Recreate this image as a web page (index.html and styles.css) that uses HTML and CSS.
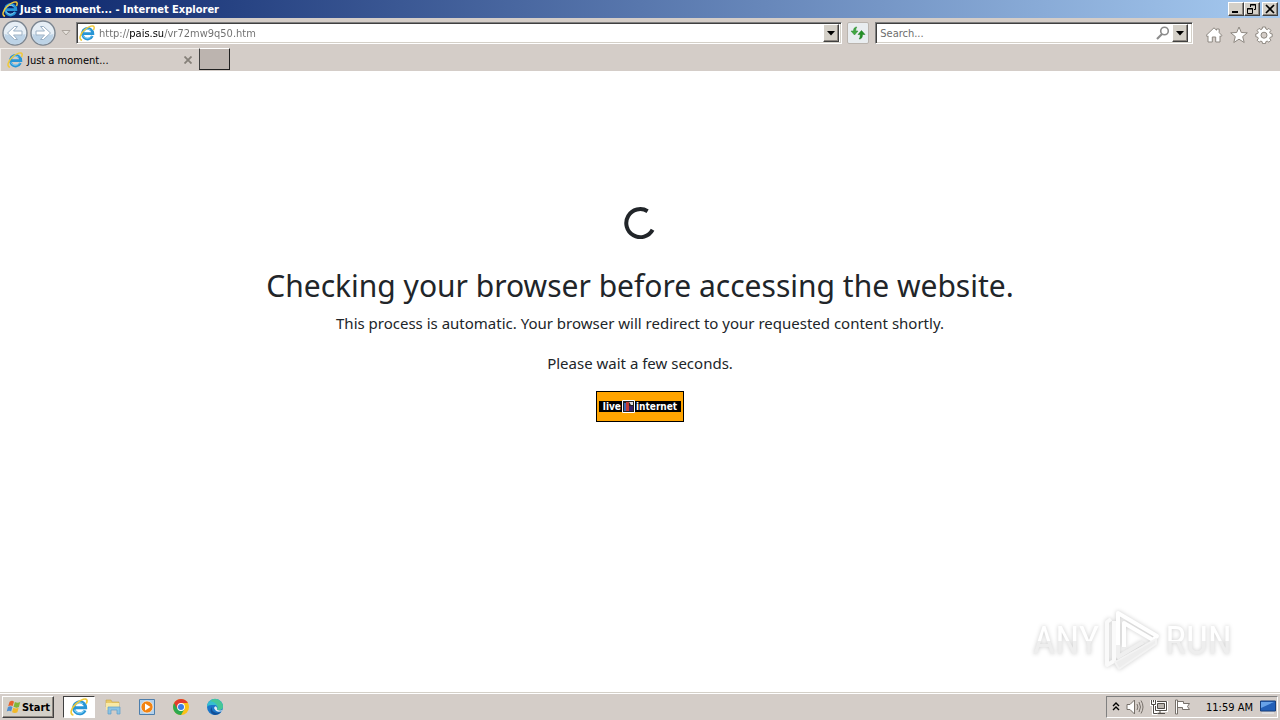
FILE: index.html
```html
<!DOCTYPE html>
<html lang="en">
<head>
    <meta charset="UTF-8">
    <meta name="viewport" content="width=device-width, initial-scale=1.0">
    <title>Just a moment...</title>
    <link rel="stylesheet" href="styles.css">
</head>
<body>

    <!-- shared icon -->
    <svg class="defs" width="0" height="0">
        <symbol id="ie" viewBox="0 0 16 16">
            <path d="M13.400 11A5.300 5.300 0 1 1 13.900 8.700H4.500" fill="none" stroke="#2795d6" stroke-width="2.700"/>
            <path d="M12.600 10.800A4.800 4.800 0 0 1 4 10.400M4.500 6.600A4.800 4.800 0 0 1 11.500 5.200" fill="none" stroke="#86d3f7" stroke-width="1"/>
            <path d="M3 15.200C-.6 14.600 1 9 5.500 5 10 1 14.600-.3 15.100 2.100c.2.900-.1 1.900-.7 2.900" fill="none" stroke="#f0c93a" stroke-width="1.500"/>
        </symbol>
    </svg>

    <header class="titlebar">
        <svg class="icon16"><use href="#ie"/></svg>
        <span class="title">Just a moment... - Internet Explorer</span>
        <div class="window-buttons">
            <button class="btn3d" aria-label="Minimize"><svg width="12" height="10"><path d="M2 8h6" stroke="#000" stroke-width="2"/></svg></button>
            <button class="btn3d" aria-label="Restore"><svg width="12" height="10"><path d="M4.500 3V.5h5v5H8M4 1h6M1.500 4.500h5v5h-5zM1 5h6" fill="none" stroke="#000"/></svg></button>
            <button class="btn3d close" aria-label="Close"><svg width="12" height="10"><path d="M2 1l8 8M10 1L2 9" stroke="#000" stroke-width="1.700"/></svg></button>
        </div>
    </header>

    <nav class="toolbar">
        <div class="nav-buttons">
            <button class="round" aria-label="Back"><svg width="26" height="26" viewBox="0 0 26 26"><circle cx="13" cy="13" r="12" fill="#e6eef5" stroke="#7b8590" stroke-width="1.400"/><path d="M2.500 14a10.500 10.500 0 0 0 21 0q-10 3-21 0z" fill="#bdd3e6"/><path d="M5.500 13l7-6.500h3L11.500 11H20v4h-8.500l4 4.500h-3z" fill="#fff" stroke="#9bb0c4"/></svg></button>
            <button class="round" aria-label="Forward"><svg width="26" height="26" viewBox="0 0 26 26"><circle cx="13" cy="13" r="12" fill="#e6eef5" stroke="#7b8590" stroke-width="1.400"/><path d="M2.500 14a10.500 10.500 0 0 0 21 0q-10 3-21 0z" fill="#bdd3e6"/><path d="M20.500 13l-7-6.500h-3l4 4.500H6v4h8.500l-4 4.500h3z" fill="#fff" stroke="#9bb0c4"/></svg></button>
            <button class="recent" aria-label="Recent pages"><svg width="10" height="6"><path d="M1 .5h8L5 5z" fill="#e6e2dd" stroke="#aaa39c"/></svg></button>
        </div>
        <div class="field address">
            <svg class="icon16"><use href="#ie"/></svg>
            <input type="text" class="url" aria-label="Address" value="http://pais.su/vr72mw9q50.htm">
            <button class="btn3d drop" aria-label="Show addresses"><svg width="8" height="5"><path d="M0 0h8L4 4.500z"/></svg></button>
        </div>
        <button class="refresh" aria-label="Refresh">
            <svg width="16" height="14" viewBox="0 0 16 14"><path d="M1 5h2.500c0-2.500 1-4 3.500-4-1 1-1.200 2-1.200 4H8L4.500 9z" fill="#41a741" stroke="#2f8a35" stroke-width=".5"/><path d="M15 8.500h-2.500c0 3-1 4.500-3.500 4.500 1-1 1.200-2 1.200-4.500H8L11.500 4.500z" fill="#249126" stroke="#1b7a20" stroke-width=".5"/></svg>
        </button>
        <div class="field search">
            <input type="text" aria-label="Search" placeholder="Search...">
            <svg width="14" height="14" viewBox="0 0 14 14"><circle cx="8.500" cy="5" r="3.800" fill="none" stroke="#8b8b8b" stroke-width="1.600"/><path d="M6 8l-5 5" stroke="#8b8b8b" stroke-width="2.200"/></svg>
            <button class="btn3d drop" aria-label="Search providers"><svg width="8" height="5"><path d="M0 0h8L4 4.500z"/></svg></button>
        </div>
        <div class="tools">
            <button aria-label="Home"><svg width="18" height="18" viewBox="0 0 18 18"><path d="M1 9.500L9 1.800l2.500 2.400V3h2.700v3.700L17 9.500l-1.200 1L15 9.800V16h-4.300v-5H7.300v5H3V9.800l-.8.700z" fill="#fff" stroke="#8d8780"/></svg></button>
            <button aria-label="Favorites"><svg width="18" height="18" viewBox="0 0 18 18"><path d="M9 1l2.300 5.500 6 .3-4.600 3.800 1.500 5.900L9 13.200l-5.200 3.300 1.500-5.900L.7 6.800l6-.3z" fill="#fff" stroke="#8d8780"/></svg></button>
            <button aria-label="Tools"><svg width="18" height="18" viewBox="0 0 18 18"><path d="M7.500 1h3l.4 2 1.300.6 1.700-1.200 2 2-1.200 1.800.6 1.300 1.900.4v2.800l-1.900.5-.6 1.300 1.200 1.700-2 2-1.700-1.100-1.300.5-.4 2h-3l-.4-2-1.300-.5-1.700 1.100-2-2 1.200-1.700-.6-1.300-1.900-.5V7.900l1.900-.4.6-1.300-1.200-1.800 2-2 1.700 1.200L7.100 3z" fill="#fff" stroke="#8d8780"/><circle cx="9" cy="9.200" r="3" fill="#d4cdc8" stroke="#8d8780"/></svg></button>
        </div>
    </nav>

    <div class="tabs">
        <div class="tab">
            <svg class="icon16"><use href="#ie"/></svg>
            <span>Just a moment...</span>
            <button class="tab-close" aria-label="Close tab"><svg width="8" height="8"><path d="M.5.5l7 7M7.500.5l-7 7" stroke="#858079" stroke-width="1.800"/></svg></button>
        </div>
        <button class="new-tab" aria-label="New tab"></button>
    </div>

    <main class="page">
        <svg class="spinner" width="32" height="32" viewBox="0 0 32 32"><path d="M28.600 22.800A14 14 0 1 1 23.600 4.200" fill="none" stroke="#212529" stroke-width="4"/></svg>
        <h1>Checking your browser before accessing the website.</h1>
        <p>This process is automatic. Your browser will redirect to your requested content shortly.</p>
        <p>Please wait a few seconds.</p>
        <a class="counter" href="#">
            <span class="strip">
                <span>live</span>
                <svg width="13" height="13"><path d="M.5.5h12v12H.5z" fill="#222" stroke="#fff"/><path d="M2 3h2v8H2z" fill="#3b66b5"/><path d="M4 2h3v9H4z" fill="#c03a35"/><path d="M7 6h4v5H7z" fill="#36216a"/><path d="M7 2h4v3H9z" fill="#ddd"/></svg>
                <span>internet</span>
            </span>
        </a>

        <div class="watermark">
            <span>ANY</span>
            <svg width="60" height="64" viewBox="0 0 60 64" fill="none" stroke-width="4" stroke-linejoin="round">
                <path d="M9 10l-4 3v43l7-4V12" stroke="#fafafa"/>
                <path d="M16 34v14l25-15" stroke="#efefef"/>
                <path d="M16 36V4l39 23-4 4-29-17v24" stroke="#fff"/>
                <path d="M13 53l41-23v5L17 60z" fill="#ededed" stroke="#f3f3f3" stroke-width="2"/>
            </svg>
            <span>RUN</span>
        </div>
    </main>

    <footer class="taskbar">
        <button class="btn3d start">
            <svg width="16" height="16" viewBox="0 0 18 16"><path d="M4 2q3-2 5 0L7.500 7q-2-1.500-5 0z" fill="#e8632d"/><path d="M10 2.500q3 1.500 6 0L14.500 8q-3 1.500-6-.2z" fill="#82b63a"/><path d="M2.200 8q3-1.700 5 0L5.800 13q-2-1.500-5 0z" fill="#4e8ed0"/><path d="M8.200 8.800q3 1.700 6 0L12.800 14q-3 1.500-6-.2z" fill="#f2b928"/></svg>
            <span>Start</span>
        </button>
        <div class="apps">
            <button class="app active" aria-label="Internet Explorer"><svg width="18" height="18"><use href="#ie"/></svg></button>
            <button class="app" aria-label="Explorer"><svg width="18" height="18" viewBox="0 0 18 18"><path d="M2 2h5l1 2h7v5H2z" fill="#e8c967" stroke="#c7a648" stroke-width=".6"/><path d="M2 5h13v7H2z" fill="#f8e9a5"/><path d="M4 9h12v7h-3v-4H7v4H4z" fill="#8cc4e4" stroke="#5d9fc8" stroke-width=".7"/></svg></button>
            <button class="app" aria-label="Media Player"><svg width="18" height="18" viewBox="0 0 18 18"><path d="M1.500 1.500h15v15h-15z" fill="#b4d1eb" stroke="#4d7eac"/><circle cx="9" cy="9" r="6" fill="#f28312" stroke="#fff" stroke-width=".6"/><path d="M7 5.500l5.500 3.500L7 12.500z" fill="#fff"/></svg></button>
            <button class="app" aria-label="Chrome"><svg width="18" height="18" viewBox="0 0 18 18"><circle cx="9" cy="9" r="8" fill="#fbc116"/><path d="M2.100 5A8 8 0 0 0 9 17l3.500-6L9 9z" fill="#2da94f"/><path d="M2.100 5A8 8 0 0 1 15.900 5H9L5.500 11z" fill="#e33b2e"/><circle cx="9" cy="9" r="3.900" fill="#fff"/><circle cx="9" cy="9" r="3" fill="#3c7de6"/></svg></button>
            <button class="app" aria-label="Edge"><svg width="18" height="18" viewBox="0 0 18 18"><circle cx="9" cy="9" r="8" fill="#1b76c9"/><path d="M1 9a8 8 0 0 1 16-.5c0 3-2.500 4-6 3.200 1.500-2 .2-4.700-2.500-4.700C5 7 2 7 1 9z" fill="#35bfd0"/><path d="M9 1a8 8 0 0 1 8 7.500c0 3-2.500 4-6 3.200 2-3.500-1-8-7-8.400Q6 1 9 1z" fill="#4fcb7d" opacity=".7"/><path d="M6 9c-1 4 2.500 7 9 5.300A8 8 0 0 1 9 17C4 16 3.500 11 6 9z" fill="#124f97"/><path d="M8 10q.5-1.500 2-1.800 1.700 1.500 1 3.500 2.500 1.500 5.300.3l-.6 1.200Q10 15 8 10z" fill="#e3edf3"/></svg></button>
        </div>
        <div class="tray">
            <svg width="8" height="10"><path d="M1 4l3-3 3 3M1 8l3-3 3 3" fill="none" stroke="#000" stroke-width="1.400"/></svg>
            <svg width="18" height="16" viewBox="0 0 18 16"><path d="M1 5.500h3L8.500 1v14L4 10.500H1z" fill="#fff" stroke="#77716b"/><path d="M11 5q1.800 3 0 6M13 3q3 5 0 10M15 1.500q4 6.500 0 13" fill="none" stroke="#77716b"/></svg>
            <svg width="18" height="16" viewBox="0 0 18 16"><path d="M6.500 3.500h10v8h-10z" fill="#b9b4ae" stroke="#fff" stroke-width="3"/><path d="M5.500 2.500h11v9h-11zM7.500 4.500h7v5h-7zM10 12v2M7 14.500h8" fill="none" stroke="#4f4b47"/><path d="M1.500 1v4.500h4V1M3.500 5.500v9h4" fill="none" stroke="#fff" stroke-width="3"/><path d="M1.500 1v4.500h4V1M3.500 5.500v9h4M3.500 1v2" fill="none" stroke="#4f4b47"/></svg>
            <svg width="18" height="16" viewBox="0 0 18 16"><path d="M1.500 1h2v14h-2zM3.500 2.500h6v2h6l-2 3 2 3h-7v-2h-5z" fill="#fff" stroke="#77716b"/></svg>
            <span class="clock">11:59 AM</span>
            <svg width="16" height="14" viewBox="0 0 16 14"><path d="M.5 1h15v10H.5z" fill="#2360b8" stroke="#173f7c"/><path d="M1 2h13L1 8z" fill="#67a2e8"/><path d="M2 13h12" stroke="#e8edf3"/></svg>
        </div>
    </footer>

</body>
</html>
```

FILE: styles.css
```css
* {
    box-sizing: border-box;
}

body {
    display: flex;
    flex-direction: column;
    height: 100vh;
    margin: 0;
    overflow: hidden;
    background: #fff;
    color: #000;
    font-family: Tahoma, "DejaVu Sans Condensed", "DejaVu Sans", sans-serif;
    font-size: 11px;
}

button {
    display: flex;
    align-items: center;
    justify-content: center;
    margin: 0;
    padding: 0;
    border: 0;
    background: none;
    color: inherit;
    font: inherit;
}

svg {
    display: block;
    flex: none;
}

.defs {
    position: absolute;
}

.icon16 {
    width: 16px;
    height: 16px;
}

.btn3d {
    border: 1px solid;
    border-color: #fff #404040 #404040 #fff;
    box-shadow: inset -1px -1px 0 #8c8680;
    background: #d4d0c8;
}

/* title bar */
.titlebar {
    display: flex;
    align-items: center;
    gap: 2px;
    height: 18px;
    padding: 0 2px;
    background: linear-gradient(to right, #0a246a, #a6caf0);
    color: #fff;
}

.title {
    flex: 1;
    font-weight: bold;
}

.window-buttons {
    display: flex;
}

.window-buttons .btn3d {
    width: 16px;
    height: 14px;
}

.window-buttons .close {
    margin-left: 2px;
}

/* toolbar */
.toolbar {
    display: flex;
    align-items: center;
    height: 30px;
    padding: 0 7px 0 2px;
    background: #d4cdc8;
}

.nav-buttons {
    display: flex;
    align-items: center;
    gap: 2px;
    width: 74px;
}

.recent {
    width: 16px;
    height: 20px;
}

.field {
    display: flex;
    align-items: center;
    height: 22px;
    border: 1px solid;
    border-color: #808080 #fff #fff #808080;
    box-shadow: inset 1px 1px 0 #404040, inset -1px -1px 0 #d4d0c8;
    background: #fff;
}

.field input {
    flex: 1;
    min-width: 0;
    height: 16px;
    padding: 0;
    border: 0;
    outline: 0;
    background: none;
    color: #6d6d6d;
    font: inherit;
}

.field input::placeholder {
    color: #6d6d6d;
}

.address {
    flex: 1;
    gap: 4px;
    padding: 0 2px;
}

/* the host name is darker than the rest of the url */
.field .url {
    background: linear-gradient(to right, #6d6d6d 31px, #000 31px, #000 65px, #6d6d6d 65px);
    -webkit-background-clip: text;
    background-clip: text;
    color: transparent;
}

.drop {
    width: 16px;
    height: 18px;
}

.refresh {
    width: 22px;
    height: 22px;
    margin: 0 6px 0 5px;
    border: 1px solid #bab4ae;
    border-radius: 2px;
    background: #e9edf0;
}

.search {
    width: 25%;
    gap: 2px;
    padding: 0 4px;
}

.tools {
    display: flex;
    gap: 7px;
    padding: 3px 0 0 12px;
}

/* tabs */
.tabs {
    display: flex;
    height: 23px;
    background: #d4cdc8;
}

.tab {
    display: flex;
    align-items: center;
    gap: 4px;
    width: 199px;
    padding: 0 7px 0 6px;
    border: 1px solid #f1eeeb;
    border-width: 1px 0 0 1px;
}

.tab span {
    flex: 1;
}

.new-tab {
    width: 31px;
    height: 22px;
    border: 1px solid;
    border-color: #fff #202020 #202020 #404040;
    background: #bcb4af;
}

/* page content */
.page {
    position: relative;
    display: flex;
    flex: 1;
    flex-direction: column;
    align-items: center;
    padding-top: 136px;
    color: #212529;
    font-family: "Segoe UI", "Noto Sans", "Open Sans", sans-serif;
    font-size: 15px;
    line-height: 24px;
    text-align: center;
}

.page h1 {
    margin: 28px 0 6px;
    font-size: 30px;
    font-weight: 400;
    line-height: 38px;
}

.page p {
    margin: 0 0 16px;
}

.counter {
    display: flex;
    align-items: center;
    justify-content: center;
    width: 88px;
    height: 31px;
    border: 1px solid #000;
    background: #ffa400;
    color: #fff;
    font-family: "DejaVu Sans Condensed", sans-serif;
    font-size: 10px;
    font-weight: bold;
    line-height: 11px;
    text-decoration: none;
}

.strip {
    display: flex;
    align-items: center;
    justify-content: center;
    gap: 1px;
    width: 82px;
    height: 11px;
    background: #000;
}

.watermark {
    position: absolute;
    right: 48px;
    bottom: 19px;
    display: flex;
    align-items: center;
    gap: 3px;
    color: #fff;
    font-family: "Liberation Sans Narrow", "Roboto Condensed", sans-serif;
    font-size: 39px;
    line-height: 64px;
    filter: drop-shadow(0 0 2px #ccc);
}

.watermark span {
    background: linear-gradient(to bottom, #fff 50%, #eee 50%);
    -webkit-background-clip: text;
    background-clip: text;
    color: transparent;
}

/* taskbar */
.taskbar {
    display: flex;
    align-items: center;
    height: 28px;
    padding: 1px 2px 0 2px;
    border-top: 1px solid #d4d0c8;
    box-shadow: inset 0 1px 0 #fff;
    background: #d4cdc8;
}

.start {
    width: 52px;
    height: 22px;
    font-weight: bold;
}

.apps {
    display: flex;
    flex: 1;
    gap: 2px;
    margin-left: 9px;
}

.app {
    width: 32px;
    height: 22px;
}

.app.active {
    border: 1px solid;
    border-color: #404040 #fff #fff #404040;
    background: #fff;
}

.tray {
    display: flex;
    align-items: center;
    gap: 6px;
    height: 22px;
    padding: 0 1px 0 5px;
    border: 1px solid;
    border-color: #808080 #fff #fff #808080;
}

.clock {
    margin: 0 1px 0 8px;
}
```
